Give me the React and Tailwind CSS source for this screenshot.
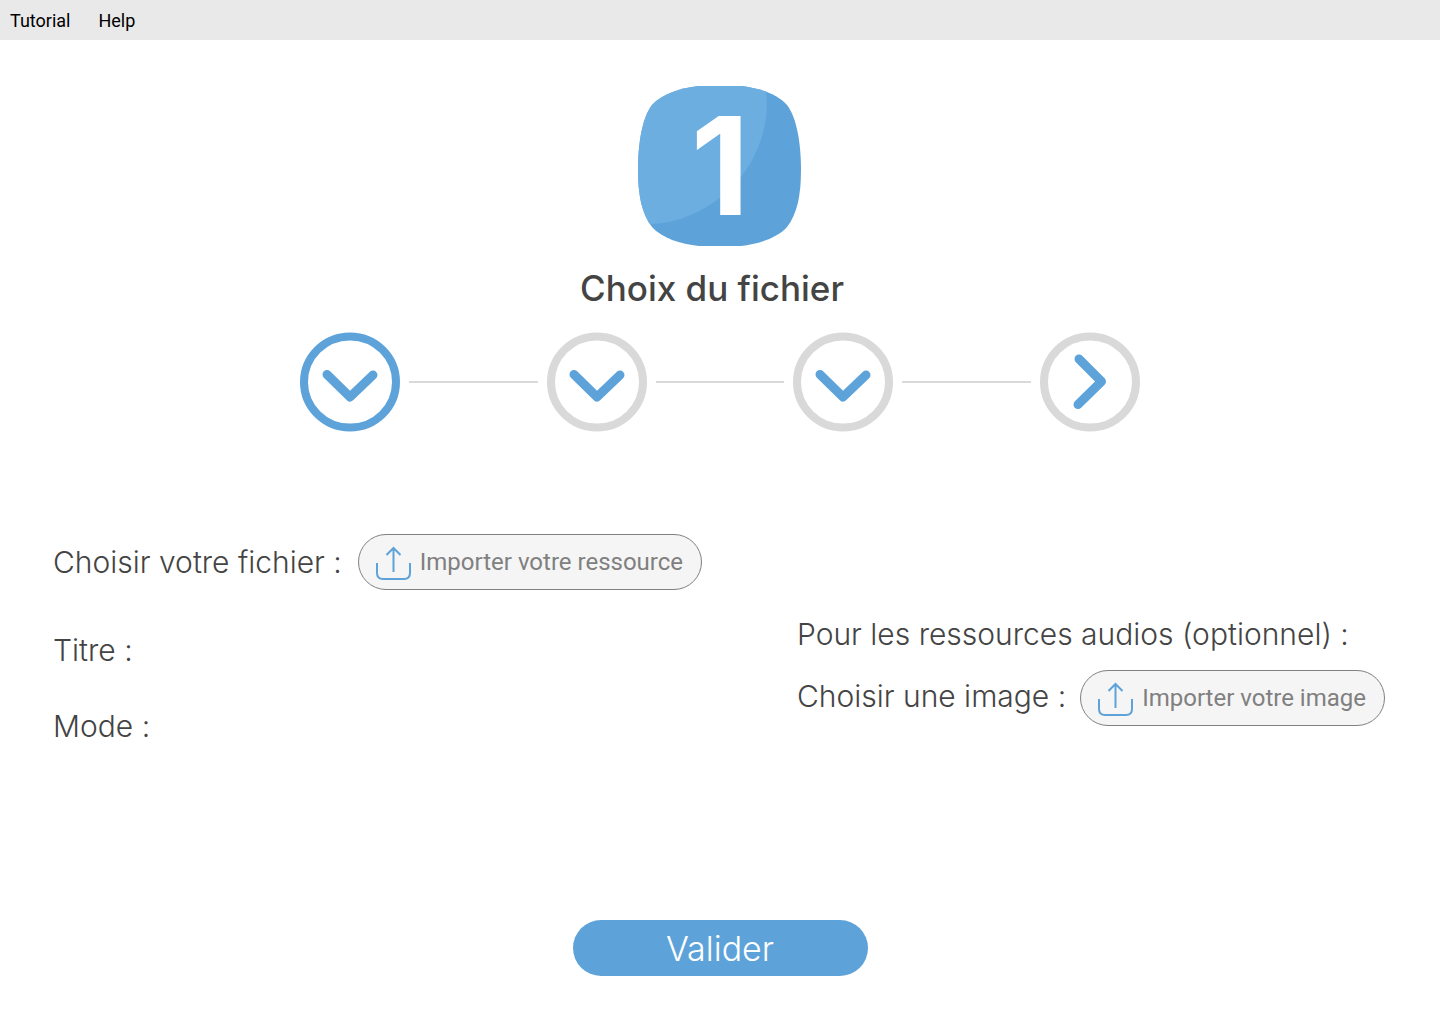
const STEPS = [
  { name: 'Choix du fichier', active: true, direction: 'down' },
  { name: 'Étape 2', active: false, direction: 'down' },
  { name: 'Étape 3', active: false, direction: 'down' },
  { name: 'Étape suivante', active: false, direction: 'right' },
];

function StepBadge() {
  return (
    <div className="relative h-40 w-[164px]">
      <svg viewBox="0 0 164 160" className="h-full w-full" aria-hidden="true">
        <defs>
          <clipPath id="badge-shape">
            <path d="M61 0 H103 C121 2 139 8 149 19 C159 32 163 58 163 84 C163 110 159 128 149 141 C139 152 121 158 103 160 H61 C42 158 24 152 14 141 C4 128 0 110 0 84 C0 58 4 32 14 19 C24 8 42 2 61 0 Z" />
          </clipPath>
        </defs>
        <g clipPath="url(#badge-shape)">
          <rect width="163" height="160" fill="#5da3da" />
          <path d="M0 0 H127 Q133 31 119 64 Q106 94 79 114 Q47 137 12 138 H0 Z" fill="#6daee1" />
        </g>
      </svg>
      <span className="absolute inset-0 flex items-center justify-center text-[136px] leading-none font-bold text-white">
        1
      </span>
    </div>
  );
}

function StepCircle({ name, active, direction }) {
  return (
    <button type="button" aria-label={name} className="shrink-0">
      <svg viewBox="0 0 100 100" className="size-[100px]" fill="none" aria-hidden="true">
        <ellipse cx="50" cy="50" rx="46" ry="45.6" stroke={active ? '#5da3da' : '#d9d9d9'} strokeWidth="8" />
        <path
          d={direction === 'down' ? 'M27 42.500 L50 65 L73 43' : 'M39 27 L61.500 49.500 L38 72.500'}
          stroke="#5da3da"
          strokeWidth="9"
          strokeLinecap="round"
          strokeLinejoin="round"
        />
      </svg>
    </button>
  );
}

function ImportButton({ id, children }) {
  return (
    <button
      id={id}
      type="button"
      className="flex h-14 items-center gap-2 rounded-full border border-[#808080] bg-[#f5f5f5] pr-[18px] pl-4 font-[Roboto,sans-serif] text-2xl font-normal whitespace-nowrap text-[#808080]"
    >
      <svg viewBox="0 0 37 38" className="h-[38px] w-[37px]" fill="none" stroke="#5da3da" strokeWidth="2" aria-hidden="true">
        <path d="M2 20 V30 Q2 36 8 36 H29 Q35 36 35 30 V20" />
        <path d="M18.500 29 V5 M11.500 12 L18.500 5 L25.500 12" />
      </svg>
      {children}
    </button>
  );
}

export default function App() {
  return (
    <div className="flex min-h-screen flex-col bg-white font-[Inter,sans-serif] text-[#444444]">
      <nav className="flex h-10 items-center gap-7 bg-[#e9e9e9] px-2.5 pt-0.5 font-[Roboto,sans-serif] text-lg text-black">
        <a href="#tutorial">Tutorial</a>
        <a href="#help">Help</a>
      </nav>

      <main className="flex flex-col items-center pt-[46px] pb-12">
        <StepBadge />
        <h1 className="mt-5 pr-4 text-[35px] leading-11 font-medium">Choix du fichier</h1>

        <ol className="mt-[22px] flex w-full max-w-[840px] items-center">
          {STEPS.map((step, i) => (
            <li key={step.name} className={i === 0 ? 'flex items-center' : 'flex flex-1 items-center'}>
              {i > 0 && <span className="mx-[9px] h-0.5 flex-1 bg-[#d9d9d9]" />}
              <StepCircle {...step} />
            </li>
          ))}
        </ol>

        <form className="mt-[102px] flex w-full flex-col items-center">
          <div className="flex w-full flex-wrap justify-between gap-y-8 pr-[55px] pl-[53px] text-[30px] leading-10 font-light">
            <div>
              <div className="flex items-center gap-4">
                <label htmlFor="import-resource">Choisir votre fichier :</label>
                <ImportButton id="import-resource">Importer votre ressource</ImportButton>
              </div>
              <p className="mt-10">Titre :</p>
              <p className="mt-9">Mode :</p>
            </div>
            <div className="pt-20">
              <p>Pour les ressources audios (optionnel) :</p>
              <div className="mt-4 flex items-center gap-3.5">
                <label htmlFor="import-image" className="pb-1">Choisir une image :</label>
                <ImportButton id="import-image">Importer votre image</ImportButton>
              </div>
            </div>
          </div>
          <button type="submit" className="mt-[174px] h-14 w-[295px] rounded-full bg-[#5da3da] text-[34px] font-light text-white">
            Valider
          </button>
        </form>
      </main>
    </div>
  );
}
